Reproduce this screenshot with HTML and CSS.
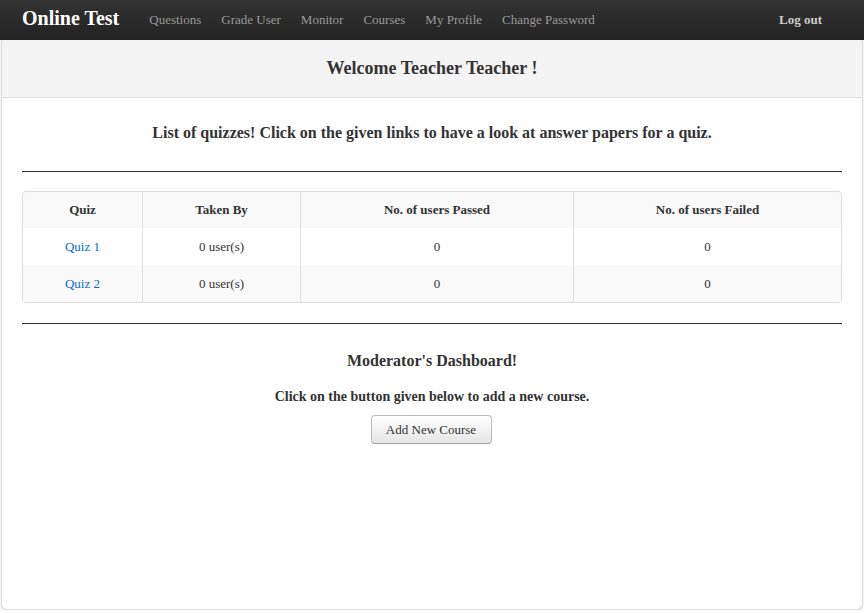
FILE: index.html
```html
<!DOCTYPE html>
<html>
<head>
<meta charset="utf-8">
<link rel="stylesheet" href="styles.css">
</head>
<body>
<nav class="navbar">
  <a class="brand">Online Test</a>
  <ul class="nav">
    <li>Questions</li>
    <li>Grade User</li>
    <li>Monitor</li>
    <li>Courses</li>
    <li>My Profile</li>
    <li>Change Password</li>
  </ul>
  <a class="logout">Log out</a>
</nav>
<div class="box">
  <div class="box-head"><h2>Welcome Teacher Teacher !</h2></div>
  <div class="box-body">
    <h3 class="intro">List of quizzes! Click on the given links to have a look at answer papers for a quiz.</h3>
    <hr>
    <table class="quiz">
      <thead>
        <tr><th class="c1">Quiz</th><th class="c2">Taken By</th><th class="c3">No. of users Passed</th><th>No. of users Failed</th></tr>
      </thead>
      <tbody>
        <tr><td><a>Quiz 1</a></td><td>0 user(s)</td><td>0</td><td>0</td></tr>
        <tr class="odd"><td><a>Quiz 2</a></td><td>0 user(s)</td><td>0</td><td>0</td></tr>
      </tbody>
    </table>
    <hr>
    <h3 class="mod">Moderator's Dashboard!</h3>
    <h4 class="hint">Click on the button given below to add a new course.</h4>
    <div class="actions"><button class="btn">Add New Course</button></div>
  </div>
</div>
</body>
</html>
```
FILE: styles.css
```css
html, body {
  margin: 0;
  padding: 0;
  background: #fff;
  font-family: "Liberation Serif", "Times New Roman", serif;
  color: #333;
}
.navbar {
  height: 40px;
  background: linear-gradient(#333, #222);
  display: flex;
  align-items: center;
  padding: 0 22px;
  box-sizing: border-box;
}
.brand {
  color: #fff;
  font-size: 20px;
  font-weight: bold;
  margin-right: 20px;
  margin-top: -3px;
}
.nav {
  list-style: none;
  margin: 0;
  padding: 0;
  display: flex;
  flex: 1;
}
.nav li {
  color: #999;
  font-size: 13px;
  padding: 0 10px;
}
.logout {
  color: #ccc;
  font-weight: bold;
  font-size: 13px;
  margin-right: 20px;
}
.box {
  margin: 0 1px 0 1px;
  height: 570px;
  border: 1px solid #ddd;
  border-top: none;
  border-radius: 0 0 6px 6px;
  box-shadow: 0 2px 3px rgba(0,0,0,0.12);
  background: #fff;
  box-sizing: border-box;
}
.box-head {
  height: 57px;
  background: #f4f4f4;
  border-bottom: 1px solid #ddd;
  display: flex;
  align-items: center;
  justify-content: center;
}
.box-head h2 {
  margin: 0;
  font-size: 18px;
  font-weight: bold;
  color: #333;
}
.box-body {
  padding: 0 20px;
}
.intro {
  text-align: center;
  font-size: 16px;
  margin: 25px 0 0;
  line-height: 20px;
}
hr {
  border: none;
  border-top: 1px solid #333;
  margin: 28px 0 19px;
}
.quiz {
  width: 100%;
  border: 1px solid #ddd;
  border-radius: 4px;
  border-collapse: separate;
  border-spacing: 0;
  font-size: 13px;
  margin-bottom: 0;
}
.quiz + hr { margin-top: 20px; }
.quiz th, .quiz td {
  height: 37px;
  padding: 0 8px;
  text-align: center;
  border-left: 1px solid #ddd;
  box-sizing: border-box;
}
.quiz th:first-child, .quiz td:first-child { border-left: none; }
.quiz th {
  background: #f9f9f9;
  font-weight: bold;
  height: 36px;
}
.quiz thead th:first-child { border-top-left-radius: 4px; }
.quiz thead th:last-child { border-top-right-radius: 4px; }
.quiz tr.odd td { background: #f9f9f9; }
.quiz tr.odd td:first-child { border-bottom-left-radius: 4px; }
.quiz tr.odd td:last-child { border-bottom-right-radius: 4px; }
.c1 { width: 119px; }
.c2 { width: 158px; }
.c3 { width: 273px; }
.quiz a { color: #0a6cd6; }
.mod {
  text-align: center;
  font-size: 16px;
  margin: 27px 0 0;
  line-height: 20px;
}
.hint {
  text-align: center;
  font-size: 14px;
  margin: 17px 0 0;
  line-height: 18px;
}
.actions {
  text-align: center;
  margin-top: 9px;
}
.btn {
  font-family: "Liberation Serif", "Times New Roman", serif;
  font-size: 13px;
  color: #333;
  width: 121px;
  height: 29px;
  border: 1px solid #bbb;
  border-bottom-color: #a2a2a2;
  border-radius: 4px;
  background: linear-gradient(#fff, #e6e6e6);
  box-shadow: inset 0 1px 0 rgba(255,255,255,.2), 0 1px 2px rgba(0,0,0,.05);
  padding: 0;
  margin-left: -2px;
}
```
